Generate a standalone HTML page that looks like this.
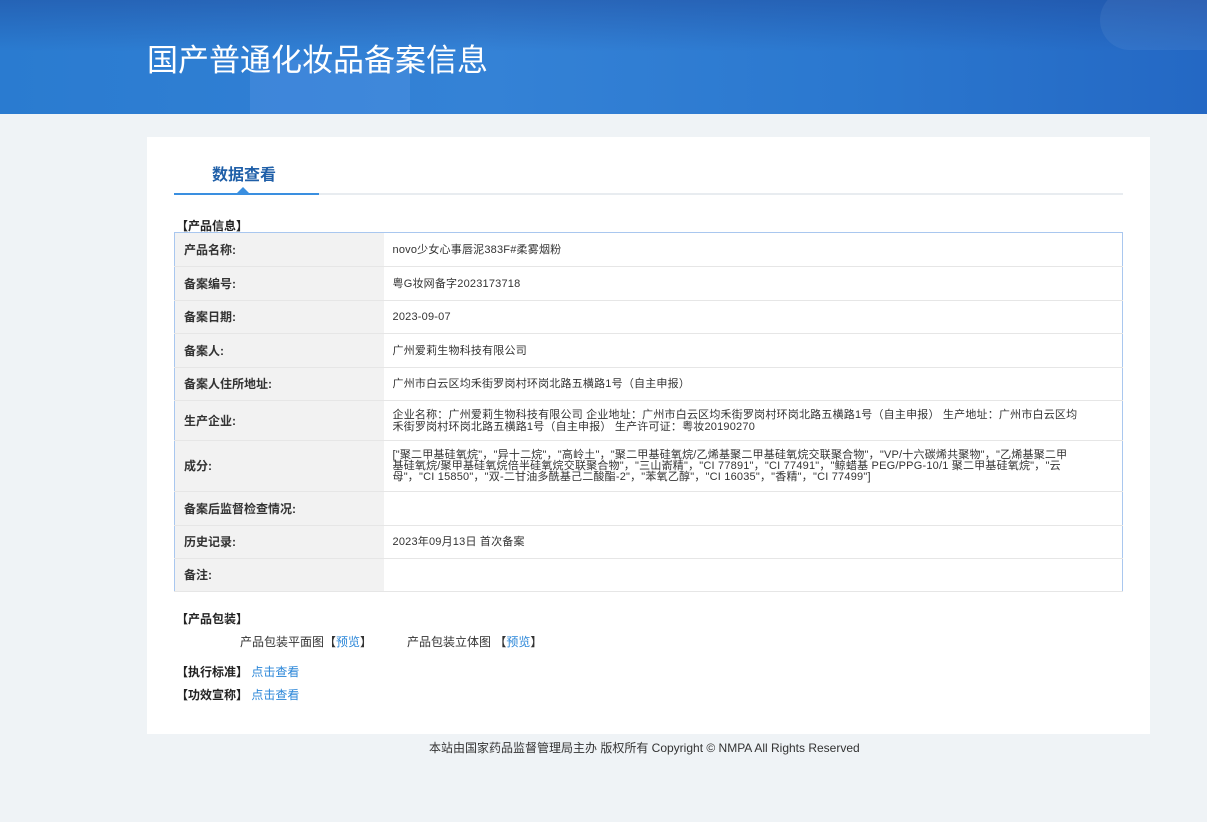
<!DOCTYPE html><html><head><meta charset="utf-8"><style>
*{margin:0;padding:0;box-sizing:border-box}
body{width:1207px;height:822px;background:#eff3f6;font-family:"Liberation Sans","Noto Sans CJK SC",sans-serif;font-size:11px;color:#333;position:relative;overflow:hidden}
.hd{position:absolute;left:0;top:0;width:1207px;height:114px;background:linear-gradient(180deg,rgba(30,70,150,.45) 0%,rgba(30,70,150,0) 45%),linear-gradient(90deg,#2a7bd0 0%,#3482d6 40%,#2b78cf 70%,#2468c4 100%);overflow:hidden}
.hd h1{position:absolute;left:147px;top:35px;color:#fff;font-size:31px;font-weight:normal;letter-spacing:0}
.card{position:absolute;left:147px;top:137px;width:1003px;height:597px;background:#fff}
.tab{position:absolute;left:65px;top:24px;font-size:16px;font-weight:bold;color:#1f5fa8}
.ln{position:absolute;left:27px;top:56px;width:949px;height:2px;background:#e8ecf0}
.ln b{position:absolute;left:0;top:0;width:145px;height:2px;background:#3a8fe0}
.ln i{position:absolute;left:63px;top:-6px;border:6px solid transparent;border-bottom-color:#3a8fe0;border-top:0}
.sec{position:absolute;left:29px;font-weight:bold;font-size:12px;color:#222}
table{position:absolute;left:27px;top:95px;width:949px;border-collapse:collapse;border:1px solid #a9c7ef}
td{border-bottom:1px solid #e6e6e6;padding:0 9px;font-size:11px;line-height:12px;color:#333;letter-spacing:.2px}
td.l{width:209px;background:#f2f2f2;font-weight:bold;font-size:12px;color:#333;letter-spacing:0}
a{color:#2a86d8;text-decoration:none}
.ft{position:absolute;top:739px;left:429px;font-size:12px;color:#333}
</style></head><body>
<div class="hd"><div style="position:absolute;left:250px;top:60px;width:160px;height:60px;background:rgba(90,150,230,.35)"></div><div style="position:absolute;left:1100px;top:-10px;width:200px;height:60px;border-radius:30px;background:rgba(255,255,255,.06)"></div><h1>国产普通化妆品备案信息</h1></div>
<div class="card">
<div class="tab">数据查看</div>
<div class="ln"><b></b><i></i></div>
<div class="sec" style="top:80px">【产品信息】</div>
<table>
<tr style="height:34px"><td class="l">产品名称:</td><td>novo少女心事唇泥383F#柔雾烟粉</td></tr>
<tr style="height:34px"><td class="l">备案编号:</td><td>粤G妆网备字2023173718</td></tr>
<tr style="height:33px"><td class="l">备案日期:</td><td>2023-09-07</td></tr>
<tr style="height:34px"><td class="l">备案人:</td><td>广州爱莉生物科技有限公司</td></tr>
<tr style="height:33px"><td class="l">备案人住所地址:</td><td>广州市白云区均禾街罗岗村环岗北路五横路1号（自主申报）</td></tr>
<tr style="height:40px"><td class="l">生产企业:</td><td>企业名称：广州爱莉生物科技有限公司 企业地址：广州市白云区均禾街罗岗村环岗北路五横路1号（自主申报） 生产地址：广州市白云区均<br>禾街罗岗村环岗北路五横路1号（自主申报） 生产许可证：粤妆20190270</td></tr>
<tr style="height:51px"><td class="l">成分:</td><td style="line-height:11px">["聚二甲基硅氧烷"，"异十二烷"，"高岭土"，"聚二甲基硅氧烷/乙烯基聚二甲基硅氧烷交联聚合物"，"VP/十六碳烯共聚物"，"乙烯基聚二甲<br>基硅氧烷/聚甲基硅氧烷倍半硅氧烷交联聚合物"，"三山嵛精"，"CI 77891"，"CI 77491"，"鲸蜡基 PEG/PPG-10/1 聚二甲基硅氧烷"，"云<br>母"，"CI 15850"，"双-二甘油多酰基己二酸酯-2"，"苯氧乙醇"，"CI 16035"，"香精"，"CI 77499"]</td></tr>
<tr style="height:34px"><td class="l">备案后监督检查情况:</td><td></td></tr>
<tr style="height:33px"><td class="l">历史记录:</td><td>2023年09月13日 首次备案</td></tr>
<tr style="height:33px"><td class="l">备注:</td><td></td></tr>
</table>
<div class="sec" style="top:473px">【产品包装】</div>
<div style="position:absolute;left:93px;top:496px;font-size:12px">产品包装平面图【<a>预览</a>】</div>
<div style="position:absolute;left:260px;top:496px;font-size:12px">产品包装立体图 【<a>预览</a>】</div>
<div class="sec" style="top:526px">【执行标准】 <a style="font-weight:normal">点击查看</a></div>
<div class="sec" style="top:549px">【功效宣称】 <a style="font-weight:normal">点击查看</a></div>
</div>
<div class="ft">本站由国家药品监督管理局主办 版权所有 Copyright © NMPA All Rights Reserved</div>
</body></html>
